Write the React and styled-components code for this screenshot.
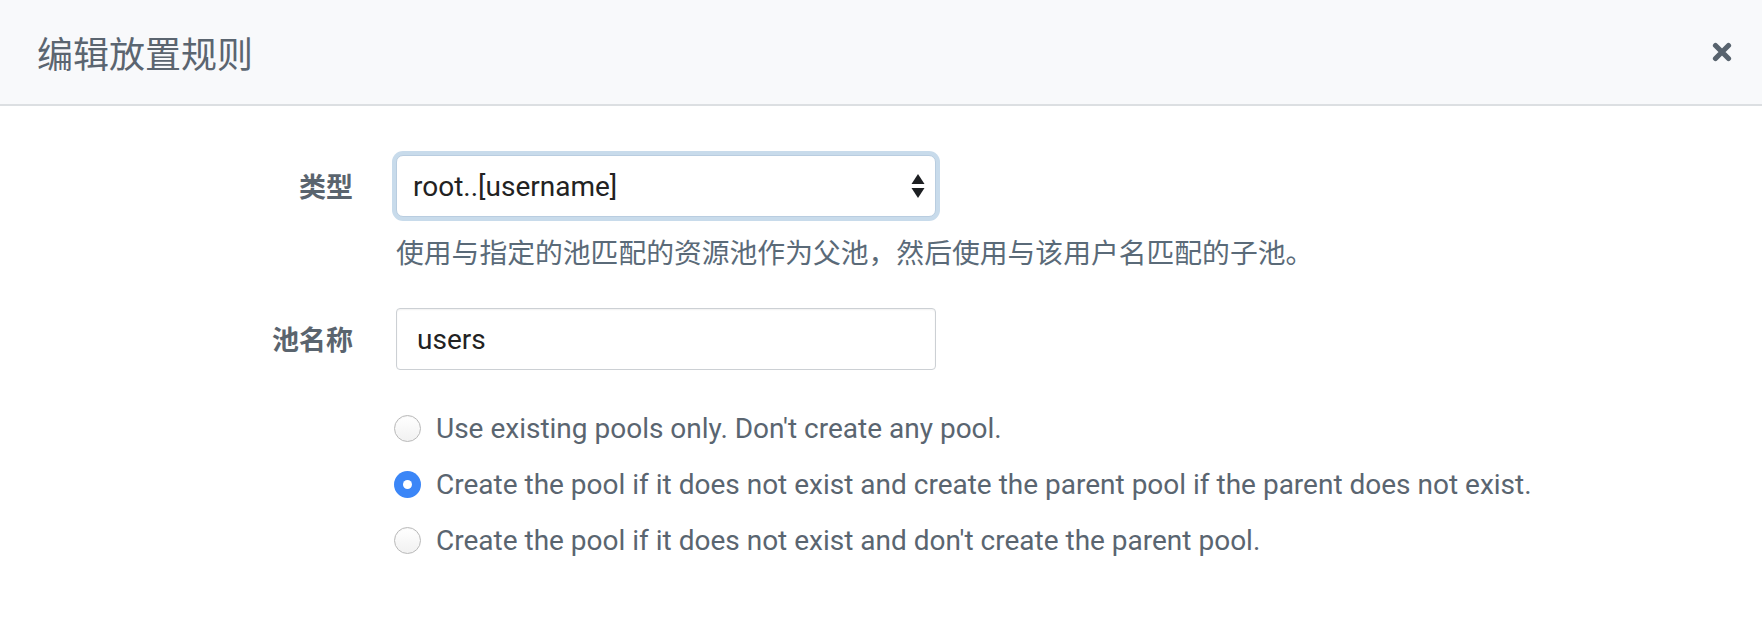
import React from "react";
import styled, { createGlobalStyle } from "styled-components";

const Global = createGlobalStyle`
  html, body { margin: 0; padding: 0; background: #ffffff; }
  body { font-family: Roboto, "Noto Sans CJK SC", sans-serif; }
`;

const Modal = styled.div`
  width: 1762px;
  height: 626px;
  background: #fff;
  display: flex;
  flex-direction: column;
`;

const Header = styled.div`
  height: 106px;
  box-sizing: border-box;
  background: #f8f9fb;
  border-bottom: 2px solid #dcdfe2;
  display: flex;
  align-items: center;
  justify-content: space-between;
  padding: 0 30px 0 37px;
`;

const Title = styled.h2`
  margin: 0;
  font-family: "Noto Sans CJK SC", sans-serif;
  font-weight: 400;
  font-size: 36px;
  line-height: 44px;
  color: #5b6570;
`;

const CloseButton = styled.button`
  border: 0;
  background: transparent;
  padding: 0;
  width: 20px;
  height: 20px;
  display: flex;
  cursor: pointer;
`;

const Body = styled.div`
  padding-top: 49px;
  display: flex;
  flex-direction: column;
`;

const Row = styled.div`
  display: grid;
  grid-template-columns: 353px 540px;
  column-gap: 43px;
  align-items: start;
  margin-top: ${(p) => p.$mt || 0}px;
`;

const Label = styled.label`
  font-family: "Noto Sans CJK SC", sans-serif;
  font-size: 27px;
  font-weight: 600;
  color: #5a646e;
  text-align: right;
  height: 62px;
  line-height: 62px;
`;

const Field = styled.div`
  display: flex;
  flex-direction: column;
`;

const SelectBox = styled.div`
  position: relative;
  box-sizing: border-box;
  height: 62px;
  border: 1px solid #b9cde0;
  border-radius: 7px;
  box-shadow: 0 0 0 4px #c8dbeb;
  background: #fff;
  display: flex;
  align-items: center;
  justify-content: space-between;
  padding: 0 8px 0 16px;
  font-family: Roboto, sans-serif;
  font-size: 28px;
  color: #222;
`;

const Arrows = styled.span`
  display: flex;
  width: 16px;
  margin-right: 1px;
`;

const Help = styled.div`
  margin-top: 14px;
  font-family: "Noto Sans CJK SC", sans-serif;
  font-size: 27.8px;
  line-height: 40px;
  color: #5a6a78;
  white-space: nowrap;
`;

const TextInput = styled.div`
  box-sizing: border-box;
  height: 62px;
  border: 1px solid #ccd0d4;
  border-radius: 4px;
  box-shadow: inset 0 1px 2px rgba(0, 0, 0, 0.06);
  display: flex;
  align-items: center;
  padding: 0 20px;
  font-family: Roboto, sans-serif;
  font-size: 28px;
  color: #222;
`;

const RadioList = styled.div`
  display: flex;
  flex-direction: column;
  margin-top: 30px;
  padding-left: 394px;
`;

const RadioRow = styled.label`
  height: 56px;
  display: flex;
  align-items: center;
  gap: 15px;
  font-family: Roboto, sans-serif;
  font-size: 28px;
  color: #5a6570;
  white-space: nowrap;
`;

const RadioDot = styled.span`
  box-sizing: border-box;
  width: 27px;
  height: 27px;
  border-radius: 50%;
  flex: none;
  display: flex;
  align-items: center;
  justify-content: center;
  border: ${(p) => (p.$checked ? "none" : "1px solid #b9b9b9")};
  background: ${(p) =>
    p.$checked ? "#3b86f7" : "linear-gradient(#ffffff, #f1f1f1)"};
  box-shadow: ${(p) => (p.$checked ? "none" : "inset 0 1px 1px rgba(0,0,0,0.04)")};
  &::after {
    content: "";
    display: ${(p) => (p.$checked ? "block" : "none")};
    width: 9px;
    height: 9px;
    border-radius: 50%;
    background: #fff;
  }
`;

const options = [
  { text: "Use existing pools only. Don't create any pool.", checked: false },
  {
    text: "Create the pool if it does not exist and create the parent pool if the parent does not exist.",
    checked: true,
  },
  { text: "Create the pool if it does not exist and don't create the parent pool.", checked: false },
];

export default function App() {
  return (
    <Modal>
      <Global />
      <Header>
        <Title>编辑放置规则</Title>
        <CloseButton aria-label="close">
          <svg width="20" height="20" viewBox="0 0 20 20">
            <path
              d="M3.5 3.5 L16.5 16.5 M16.5 3.5 L3.5 16.5"
              stroke="#58636e"
              strokeWidth="5.2"
              strokeLinecap="round"
            />
          </svg>
        </CloseButton>
      </Header>
      <Body>
        <Row>
          <Label>类型</Label>
          <Field>
            <SelectBox>
              <span>root..[username]</span>
              <Arrows>
                <svg width="16" height="26" viewBox="0 0 16 26">
                  <path d="M8 1 L14.5 11 L1.5 11 Z" fill="#1d1f22" />
                  <path d="M1.5 15 L14.5 15 L8 25 Z" fill="#1d1f22" />
                </svg>
              </Arrows>
            </SelectBox>
            <Help>使用与指定的池匹配的资源池作为父池，然后使用与该用户名匹配的子池。</Help>
          </Field>
        </Row>
        <Row $mt={37}>
          <Label>池名称</Label>
          <TextInput>users</TextInput>
        </Row>
        <RadioList>
          {options.map((o) => (
            <RadioRow key={o.text}>
              <RadioDot $checked={o.checked} />
              {o.text}
            </RadioRow>
          ))}
        </RadioList>
      </Body>
    </Modal>
  );
}
